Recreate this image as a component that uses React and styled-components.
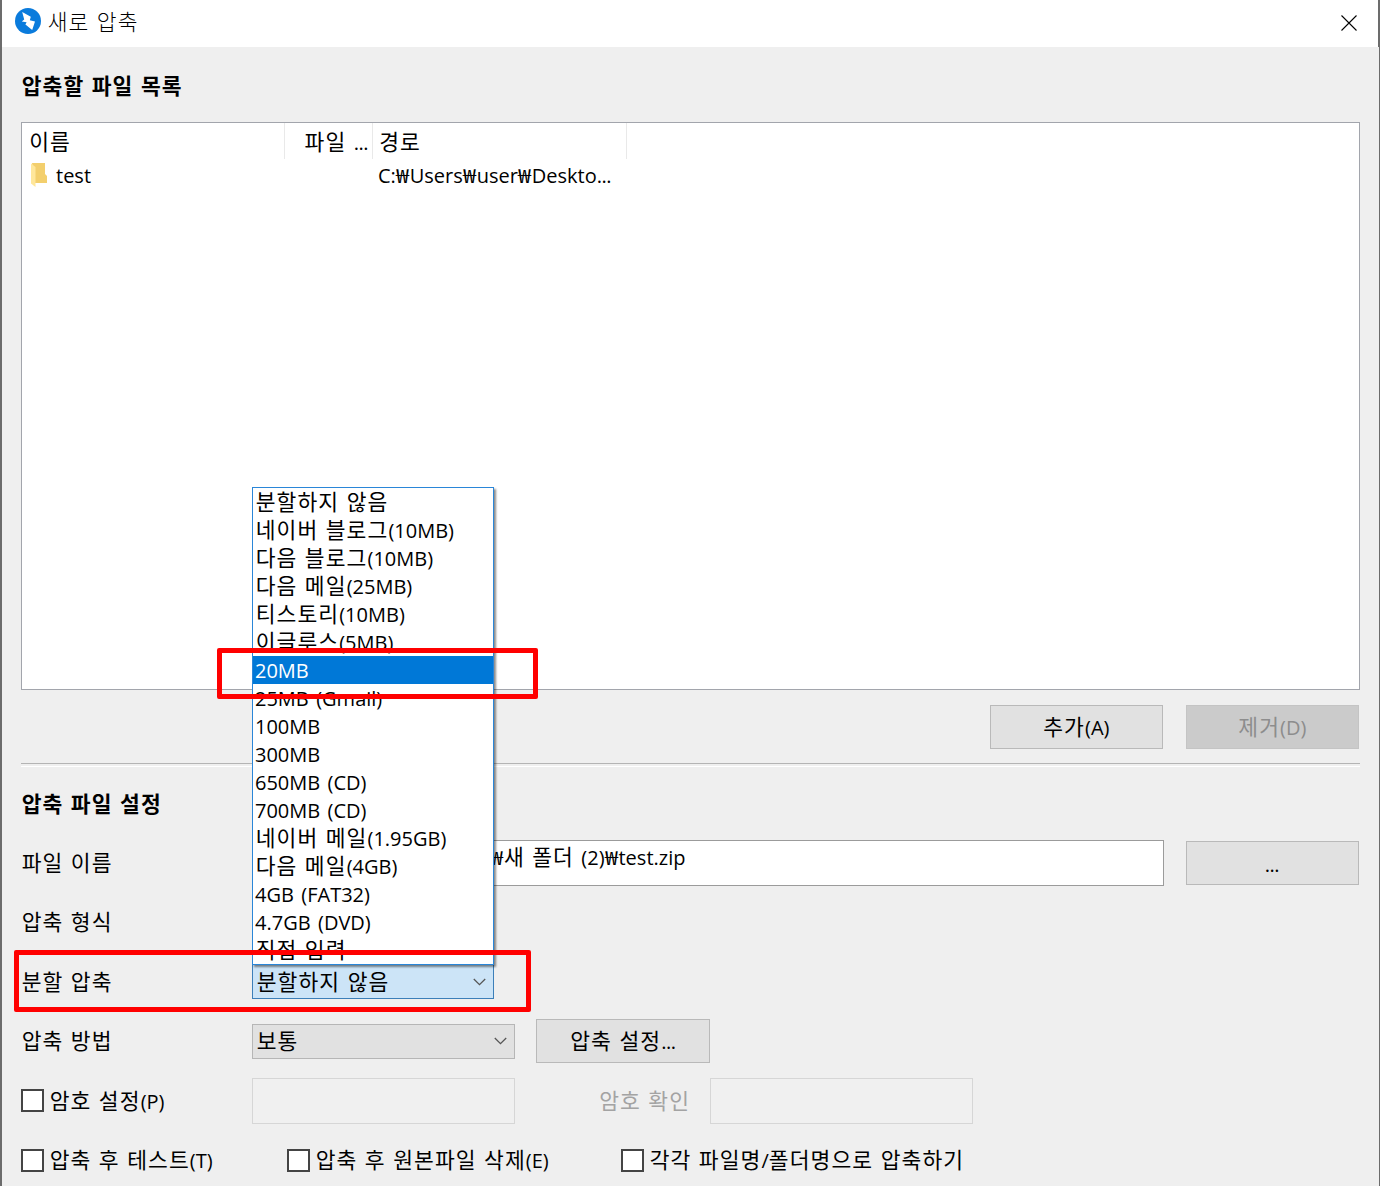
import React from "react";
import styled, { createGlobalStyle } from "styled-components";

const Global = createGlobalStyle`
  *, *::before, *::after { box-sizing: border-box; }
  body { margin: 0; background: #efefef; }
`;

const Window = styled.div`
  position: relative;
  width: 1380px;
  height: 1186px;
  overflow: hidden;
  display: flex;
  flex-direction: column;
  background: #efefef;
  border-left: 2px solid #6c6c6c;
  border-right: 1px solid #6c6c6c;
  color: #000;
  font-family: "Open Sans", "Noto Sans CJK KR", sans-serif;
  font-size: 20px;
`;

const TitleBar = styled.header`
  display: flex;
  align-items: center;
  flex: none;
  height: 47px;
  padding: 0 20px 5px 13px;
  background: #fff;
  border-right: 1px solid #6c6c6c;
`;

const TitleText = styled.h1`
  flex: 1;
  margin: 0 0 0 6px;
  font-size: inherit;
  font-weight: 300;
  padding-top: 2px;
`;

const IconButton = styled.button`
  display: flex;
  padding: 0;
  margin: 3px 1px 0 0;
  border: 0;
  background: none;
`;

const Body = styled.main`
  display: flex;
  flex-direction: column;
  padding: 0 19px 0 19px;
`;

const Heading = styled.h2`
  display: flex;
  align-items: center;
  height: ${(p) => p.$height}px;
  padding-top: ${(p) => p.$drop}px;
  margin: 0;
  font-size: inherit;
  font-weight: 700;
`;

const Line = styled.span`
  display: inline-block;
  padding-top: 2px;
  white-space: pre;
  line-height: 26px;
  word-spacing: 2.2px;
`;

const Hangul = styled.span`
  font-family: "Noto Sans CJK KR", sans-serif;
  font-size: 21.5px;
  line-height: 1;
  letter-spacing: 1.1px;

  &:first-child {
    margin-left: 0.7px;
  }
`;

const Won = styled.span`
  display: inline-block;
  width: 13.9px;
  font-family: "Noto Sans CJK KR", sans-serif;
  font-size: 19.5px;
  line-height: 1;
  transform: scaleX(1.2);
  transform-origin: left;
`;

const Dots = styled.span`
  letter-spacing: -0.5px;
`;

function Text({ children }) {
  const runs = children.match(/[\uac00-\ud7a3]+|₩|\.{3}|(?:(?!\.{3})[^\uac00-\ud7a3₩])+/g) || [];
  return (
    <Line>
      {runs.map((run, i) => {
        if (run === "₩") return <Won key={i}>{run}</Won>;
        if (run === "...") return <Dots key={i}>{run}</Dots>;
        return /[\uac00-\ud7a3]/.test(run) ? <Hangul key={i}>{run}</Hangul> : run;
      })}
    </Line>
  );
}

const FileList = styled.section`
  height: 568px;
  width: 1339px;
  background: #fff;
  border: 1px solid #a2a5ac;
`;

const ListRow = styled.div`
  display: grid;
  grid-template-columns: 263px 88px 254px;
  height: ${(p) => p.$height}px;
`;

const HeadCell = styled.div`
  display: flex;
  align-items: center;
  justify-content: ${(p) => (p.$end ? "flex-end" : "flex-start")};
  padding: 1px ${(p) => (p.$end ? 4 : 5)}px 0 ${(p) => p.$pad || 0}px;
  border-right: 1px solid #e9e9e9;
`;

const Cell = styled.div`
  display: flex;
  align-items: center;
  gap: 9px;
  padding-left: ${(p) => p.$pad || 0}px;
`;

const Actions = styled.div`
  display: flex;
  justify-content: flex-end;
  gap: 23px;
  padding: 15px 1px 14px 0;
`;

const Button = styled.button`
  flex: none;
  width: ${(p) => p.$width || 173}px;
  height: 44px;
  padding: ${(p) => p.$drop || 0}px 1px 0 0;
  border: 1px solid ${(p) => (p.disabled ? "#c4c4c4" : "#b9b9b9")};
  background: ${(p) => (p.disabled ? "#cbcbcb" : "#e1e1e1")};
  color: ${(p) => (p.disabled ? "#8d8d8d" : "#000")};
  font: inherit;
`;

const Divider = styled.hr`
  width: 100%;
  height: 4px;
  margin: 0;
  border: 0;
  border-top: 1px solid #b4b4b4;
  border-bottom: 1px solid #fff;
`;

const Form = styled.div`
  display: grid;
  grid-template-rows: 59px 60px 59px 60px 59px 60px;
`;

const FormRow = styled.div`
  display: flex;
  align-items: center;
`;

const Label = styled.label`
  display: flex;
  align-items: center;
  flex: none;
  gap: 5px;
  width: ${(p) => p.$width}px;
  padding-left: ${(p) => p.$pad || 0}px;
  color: ${(p) => (p.$muted ? "#a3a3a3" : "#000")};
`;

const Field = styled.div`
  flex: none;
  width: ${(p) => p.$width}px;
  height: 46px;
  margin-right: ${(p) => p.$gap || 0}px;
  padding: 2px 0 0 ${(p) => p.$pad || 0}px;
  background: ${(p) => (p.$off ? "#f0f0f0" : "#fff")};
  border: 1px solid ${(p) => (p.$off ? "#d6d6d6" : "#9b9b9b")};
`;

const Combo = styled.div`
  position: relative;
  display: flex;
  align-items: center;
  justify-content: space-between;
  flex: none;
  width: ${(p) => p.$width}px;
  height: 35px;
  margin-right: 21px;
  padding: 0 7px 0 3px;
  background: ${(p) => (p.$open ? "#cce4f7" : "#e1e1e1")};
  border: 1px solid ${(p) => (p.$open ? "#3c7fb9" : "#b6b6b6")};
`;

const Menu = styled.ul`
  position: absolute;
  left: -1px;
  bottom: 33px;
  width: 242px;
  margin: 0;
  padding: 0;
  list-style: none;
  background: #fff;
  border: 1px solid #2a86d8;
  box-shadow: 2px 2px 2px rgba(0, 0, 0, 0.45);
`;

const Option = styled.li`
  display: flex;
  align-items: center;
  height: 28px;
  padding-left: 2px;
  background: ${(p) => (p.$active ? "#0078d7" : "transparent")};
  color: ${(p) => (p.$active ? "#fff" : "#000")};
`;

const Box = styled.span`
  width: 23px;
  height: 23px;
  background: #fff;
  border: 2px solid #444;
`;

const Marker = styled.div`
  position: absolute;
  left: ${(p) => p.$x}px;
  top: ${(p) => p.$y}px;
  width: ${(p) => p.$w}px;
  height: ${(p) => p.$h}px;
  border: 5px solid #ff0000;
  border-radius: 2px;
`;

const AppIcon = () => (
  <svg width="26" height="26" viewBox="0 0 26 26">
    <circle cx="13" cy="13" r="13" fill="#0a7bdc" />
    <path d="M7.2 4 15.8 8.8 14.8 12.2 20 13.4 17.2 22 10.4 16.6 11.6 14.2 6.8 13.4 9.2 11.6Z" fill="#fff" />
  </svg>
);

const CloseIcon = () => (
  <svg width="16" height="16" viewBox="0 0 16 16">
    <path d="M.5.5 15.5 15.5M15.5.5.5 15.5" stroke="#000" strokeWidth="1.1" />
  </svg>
);

const FolderIcon = () => (
  <svg width="16" height="24" viewBox="0 0 16 24">
    <path d="M1 0H14V11L16 13V20H4Z" fill="#f3cf6d" />
    <path d="M0 0.5 4.5 4V24L0 20.5Z" fill="#ffe79b" />
  </svg>
);

const Chevron = () => (
  <svg width="13" height="8" viewBox="0 0 13 8">
    <path d="M.8 1 6.5 6.6 12.2 1" fill="none" stroke="#555" strokeWidth="1.3" />
  </svg>
);

const SIZES = [
  "분할하지 않음",
  "네이버 블로그(10MB)",
  "다음 블로그(10MB)",
  "다음 메일(25MB)",
  "티스토리(10MB)",
  "이글루스(5MB)",
  "20MB",
  "25MB (Gmail)",
  "100MB",
  "300MB",
  "650MB (CD)",
  "700MB (CD)",
  "네이버 메일(1.95GB)",
  "다음 메일(4GB)",
  "4GB (FAT32)",
  "4.7GB (DVD)",
  "직접 입력",
];

function Check({ width, children }) {
  return (
    <Label $width={width}>
      <Box />
      <Text>{children}</Text>
    </Label>
  );
}

export default function App() {
  return (
    <Window>
      <Global />
      <TitleBar>
        <AppIcon />
        <TitleText><Text>새로 압축</Text></TitleText>
        <IconButton aria-label="닫기"><CloseIcon /></IconButton>
      </TitleBar>
      <Body>
        <Heading $height={75} $drop={2}><Text>압축할 파일 목록</Text></Heading>
        <FileList>
          <ListRow $height={36}>
            <HeadCell $pad={6.5}><Text>이름</Text></HeadCell>
            <HeadCell $end><Text>파일 ...</Text></HeadCell>
            <HeadCell $pad={5.5}><Text>경로</Text></HeadCell>
          </ListRow>
          <ListRow $height={32}>
            <Cell $pad={9}><FolderIcon /><Text>test</Text></Cell>
            <Cell />
            <Cell $pad={5}><Text>C:₩Users₩user₩Deskto...</Text></Cell>
          </ListRow>
        </FileList>
        <Actions>
          <Button><Text>추가(A)</Text></Button>
          <Button disabled><Text>제거(D)</Text></Button>
        </Actions>
        <Divider />
        <Heading $height={66} $drop={7}><Text>압축 파일 설정</Text></Heading>
        <Form>
          <FormRow>
            <Label $width={231}><Text>파일 이름</Text></Label>
            <Field $width={912} $gap={22} $pad={237}><Text>₩새 폴더 (2)₩test.zip</Text></Field>
            <Button $drop={2}><Text>...</Text></Button>
          </FormRow>
          <FormRow>
            <Label $width={231}><Text>압축 형식</Text></Label>
          </FormRow>
          <FormRow>
            <Label $width={231}><Text>분할 압축</Text></Label>
            <Combo $open $width={242}>
              <Text>분할하지 않음</Text>
              <Chevron />
              <Menu>
                {SIZES.map((s) => (
                  <Option key={s} $active={s === "20MB"}><Text>{s}</Text></Option>
                ))}
              </Menu>
            </Combo>
          </FormRow>
          <FormRow>
            <Label $width={231}><Text>압축 방법</Text></Label>
            <Combo $width={263}><Text>보통</Text><Chevron /></Combo>
            <Button $width={174}><Text>압축 설정...</Text></Button>
          </FormRow>
          <FormRow>
            <Check width={231}>암호 설정(P)</Check>
            <Field $off $width={263} />
            <Label $muted $width={195} $pad={83.5}><Text>암호 확인</Text></Label>
            <Field $off $width={263} />
          </FormRow>
          <FormRow>
            <Check width={266}>압축 후 테스트(T)</Check>
            <Check width={334}>압축 후 원본파일 삭제(E)</Check>
            <Check width={380}>각각 파일명/폴더명으로 압축하기</Check>
          </FormRow>
        </Form>
      </Body>
      <Marker $x={215} $y={648} $w={321} $h={51} />
      <Marker $x={12} $y={950} $w={517} $h={62} />
    </Window>
  );
}
